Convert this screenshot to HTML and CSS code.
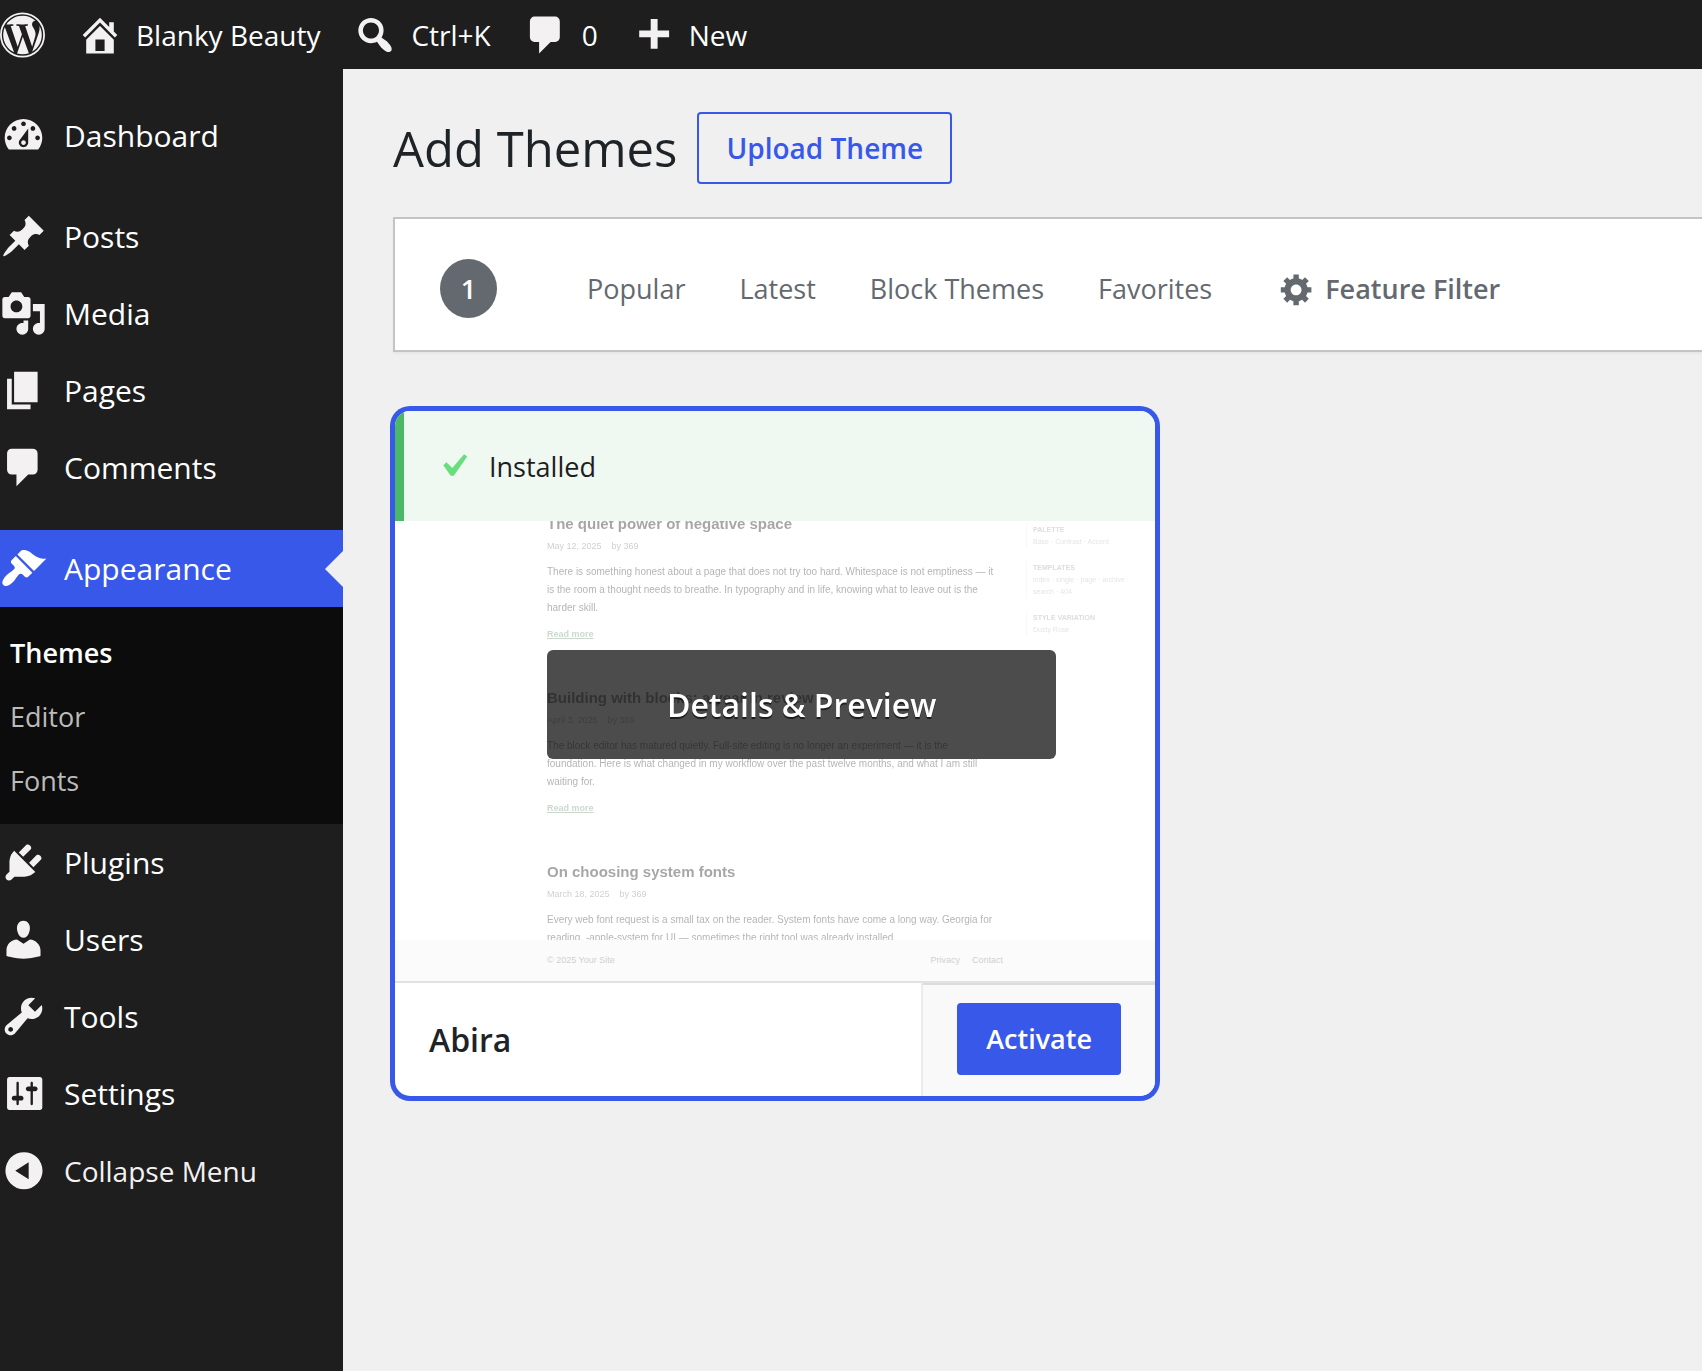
FILE: index.html
```html
<!DOCTYPE html>
<html lang="en">
<head>
  <meta charset="UTF-8" />
  <meta name="viewport" content="width=device-width, initial-scale=1.0"/>
  <title>Add Themes - Blanky Beauty</title>
  <link rel="stylesheet" href="styles.css">
</head>
<body>

  <!-- Admin bar -->
  <header class="admin-bar">
    <a href="#" class="bar-logo" aria-label="About WordPress">
      <svg viewBox="0 0 122.52 122.52"><circle cx="61.26" cy="61.26" r="58.8" fill="none" stroke="currentColor" stroke-width="4.9"/><path d="M8.708 61.26c0 20.802 12.089 38.779 29.619 47.298L13.258 39.872c-2.916 6.536-4.55 13.769-4.55 21.388zM96.74 58.608c0-6.495-2.333-10.993-4.334-14.494-2.664-4.329-5.161-7.995-5.161-12.324 0-4.831 3.664-9.328 8.825-9.328.233 0 .454.029.681.042-9.35-8.566-21.807-13.796-35.489-13.796-18.36 0-34.513 9.42-43.91 23.688 1.233.037 2.395.063 3.382.063 5.497 0 14.006-.667 14.006-.667 2.833-.167 3.167 3.994.337 4.329 0 0-2.847.335-6.015.501L48.2 93.547l11.501-34.493-8.188-22.434c-2.83-.166-5.511-.501-5.511-.501-2.832-.166-2.5-4.496.332-4.329 0 0 8.679.667 13.843.667 5.496 0 14.006-.667 14.006-.667 2.835-.167 3.168 3.994.337 4.329 0 0-2.853.335-6.015.501l18.992 56.494 5.242-17.517c2.272-7.269 4.001-12.49 4.001-16.989zM62.184 65.857l-15.768 45.819c4.708 1.384 9.687 2.141 14.846 2.141 6.12 0 11.989-1.058 17.452-2.979-.141-.225-.269-.464-.374-.724zM107.376 36.046c.226 1.674.354 3.471.354 5.404 0 5.333-.996 11.328-3.996 18.824l-16.053 46.413c15.624-9.111 26.133-26.038 26.133-45.426.001-9.137-2.333-17.729-6.438-25.215z"/></svg>
    </a>
    <a href="#">
      <svg viewBox="0 0 20 20"><path d="M16 8.5l1.53 1.53-1.06 1.06L10 4.6l-6.47 6.49-1.06-1.06L10 2.5l4 4v-2h2v4zm-6-2.46l6 5.99V18H4v-5.97zM12 17v-5H8v5h4z"/></svg>
      <span>Blanky Beauty</span>
    </a>
    <a href="#">
      <svg viewBox="0 0 20 20"><path d="M12.14 4.18c1.87 1.87 2.11 4.75.72 6.89.12.1.22.21.36.31.2.16.47.36.81.59.34.24.56.39.66.47.42.31.73.57.94.78.32.32.6.65.84 1 .25.35.44.69.59 1.04.14.35.21.68.18 1-.02.32-.14.59-.36.81s-.49.34-.81.36c-.31.02-.65-.04-.99-.19-.35-.14-.7-.34-1.04-.59-.35-.24-.68-.52-1-.84-.21-.21-.47-.52-.77-.93-.1-.13-.25-.35-.47-.66-.22-.32-.4-.57-.56-.78-.16-.2-.29-.35-.44-.5-2.07 1.09-4.69.76-6.44-.98-2.14-2.15-2.14-5.64 0-7.78 2.15-2.15 5.63-2.15 7.78 0zm-1.41 6.36c1.36-1.37 1.36-3.58 0-4.95-1.37-1.37-3.59-1.37-4.95 0-1.37 1.37-1.37 3.58 0 4.95 1.36 1.37 3.58 1.37 4.95 0z"/></svg>
      <span>Ctrl+K</span>
    </a>
    <a href="#">
      <svg viewBox="0 0 20 20"><path d="M5 2h9q.82 0 1.41.59T16 4v7q0 .82-.59 1.41T14 13h-2l-5 5v-5H5q-.82 0-1.41-.59T3 11V4q0-.82.59-1.41T5 2z"/></svg>
      <span>0</span>
    </a>
    <a href="#">
      <svg viewBox="0 0 20 20"><path d="M17 8v3h-5v5H9v-5H4V8h5V3h3v5h5z"/></svg>
      <span>New</span>
    </a>
  </header>

  <div class="admin-wrap">
    <!-- Side menu -->
    <nav class="admin-menu" aria-label="Main menu">
      <ul class="menu-list">
        <li><a href="#" class="menu-item">
          <svg viewBox="0 0 20 20"><path d="M3.76 16h12.48c1.1-1.37 1.76-3.11 1.76-5 0-4.42-3.58-8-8-8s-8 3.58-8 8c0 1.89.66 3.63 1.76 5zM10 4c.55 0 1 .45 1 1s-.45 1-1 1-1-.45-1-1 .45-1 1-1zM6 6c.55 0 1 .45 1 1s-.45 1-1 1-1-.45-1-1 .45-1 1-1zm8 0c.55 0 1 .45 1 1s-.45 1-1 1-1-.45-1-1 .45-1 1-1zm-5.37 5.55L12 7v6c0 1.1-.9 2-2 2s-2-.9-2-2c0-.57.24-1.08.63-1.45zM4 10c.55 0 1 .45 1 1s-.45 1-1 1-1-.45-1-1 .45-1 1-1zm12 0c.55 0 1 .45 1 1s-.45 1-1 1-1-.45-1-1 .45-1 1-1zm-5 3c0-.55-.45-1-1-1s-1 .45-1 1 .45 1 1 1 1-.45 1-1z"/></svg>
          Dashboard</a></li>
        <li class="group-start"><a href="#" class="menu-item">
          <svg viewBox="0 0 20 20"><path d="M10.44 3.02l1.82-1.82 6.36 6.35-1.83 1.82c-1.05-.68-2.48-.57-3.41.36l-.75.75c-.92.93-1.04 2.35-.35 3.41l-1.83 1.82-2.41-2.41-2.8 2.79c-.42.42-3.38 2.71-3.8 2.29s1.86-3.39 2.28-3.81l2.79-2.79L4.1 9.36l1.83-1.82c1.05.69 2.48.57 3.4-.36l.75-.75c.93-.92 1.05-2.35.36-3.41z"/></svg>
          Posts</a></li>
        <li><a href="#" class="menu-item">
          <svg viewBox="0 0 20 20"><path d="M13 11V4c0-.55-.45-1-1-1h-1.67L9 1H5L3.67 3H2c-.55 0-1 .45-1 1v7c0 .55.45 1 1 1h10c.55 0 1-.45 1-1zM7 4.5c1.38 0 2.5 1.12 2.5 2.5S8.38 9.5 7 9.5 4.5 8.38 4.5 7 5.62 4.5 7 4.5zM14 6h5v10.5c0 1.38-1.12 2.5-2.5 2.5S14 17.88 14 16.5s1.12-2.5 2.5-2.5c.17 0 .34.02.5.05V9h-3V6zm-4 8.05V13h2v3.5c0 1.38-1.12 2.5-2.5 2.5S7 17.88 7 16.5 8.12 14 9.5 14c.17 0 .34.02.5.05z"/></svg>
          Media</a></li>
        <li><a href="#" class="menu-item">
          <svg viewBox="0 0 20 20"><path d="M6 15V2h10v13H6zm-1 1h8v2H3V5h2v11z"/></svg>
          Pages</a></li>
        <li><a href="#" class="menu-item">
          <svg viewBox="0 0 20 20"><path d="M5 2h9q.82 0 1.41.59T16 4v7q0 .82-.59 1.41T14 13h-2l-5 5v-5H5q-.82 0-1.41-.59T3 11V4q0-.82.59-1.41T5 2z"/></svg>
          Comments</a></li>
        <li class="group-start">
          <a href="#" class="menu-item current">
            <svg viewBox="0 0 20 20"><path d="M14.48 11.06L7.41 3.99l1.5-1.5c.5-.56 2.3-.47 3.51.32 1.21.8 1.43 1.28 2.91 2.1 1.18.64 2.45 1.26 4.45.85zm-.71.71L6.7 4.7 4.93 6.47c-.39.39-.39 1.02 0 1.41l1.06 1.06c.39.39.39 1.03 0 1.42-.6.6-1.43 1.11-2.21 1.69-.35.26-.7.53-1.01.84C1.43 14.23.4 16.08 1.4 17.07c.99 1 2.84-.03 4.18-1.36.31-.31.58-.66.85-1.02.57-.78 1.08-1.61 1.69-2.21.39-.39 1.02-.39 1.41 0l1.06 1.06c.39.39 1.02.39 1.41 0z"/></svg>
            Appearance</a>
          <ul class="submenu">
            <li><a href="#" class="current">Themes</a></li>
            <li><a href="#">Editor</a></li>
            <li><a href="#">Fonts</a></li>
          </ul>
        </li>
        <li><a href="#" class="menu-item">
          <svg viewBox="0 0 20 20"><path d="M13.11 4.36L9.87 7.6 8 5.73l3.24-3.24c.35-.34 1.05-.2 1.56.32.52.51.66 1.21.31 1.55zm-8 1.77l.91-1.12 9.01 9.01-1.19.84c-.71.71-2.63 1.16-3.82 1.16H6.14L4.9 17.26c-.59.59-1.54.59-2.12 0-.59-.58-.59-1.53 0-2.12l1.24-1.24v-3.88c0-1.13.4-3.19 1.09-3.89zm7.26 3.97l3.24-3.24c.34-.35 1.04-.21 1.55.31.52.51.66 1.21.31 1.55l-3.24 3.25z"/></svg>
          Plugins</a></li>
        <li><a href="#" class="menu-item">
          <svg viewBox="0 0 20 20"><path d="M10 9.25c-2.27 0-2.73-3.44-2.73-3.44C7 4.02 7.82 2 9.97 2c2.16 0 2.98 2.02 2.71 3.81 0 0-.41 3.44-2.68 3.44zm0 2.57L12.72 10c2.39 0 4.52 2.33 4.52 4.53v2.49s-3.65 1.13-7.24 1.13c-3.65 0-7.24-1.13-7.24-1.13v-2.49c0-2.25 1.94-4.48 4.47-4.48z"/></svg>
          Users</a></li>
        <li><a href="#" class="menu-item">
          <svg viewBox="0 0 20 20"><path d="M16.68 9.77c-1.34 1.34-3.3 1.67-4.95.99l-5.41 6.52c-.99.99-2.59.99-3.58 0s-.99-2.59 0-3.57l6.52-5.42c-.68-1.65-.35-3.61.99-4.95 1.28-1.28 3.12-1.62 4.72-1.06l-2.89 2.89 2.82 2.82 2.86-2.87c.53 1.58.18 3.39-1.08 4.65zM3.81 16.21c.4.39 1.04.39 1.43 0 .4-.4.4-1.04 0-1.43-.39-.4-1.03-.4-1.43 0-.39.39-.39 1.03 0 1.43z"/></svg>
          Tools</a></li>
        <li><a href="#" class="menu-item">
          <svg viewBox="0 0 20 20"><path d="M18 16V4c0-.55-.45-1-1-1H4c-.55 0-1 .45-1 1v12c0 .55.45 1 1 1h13c.55 0 1-.45 1-1zM8 11h1c.55 0 1 .45 1 1s-.45 1-1 1H8v1.5c0 .28-.22.5-.5.5s-.5-.22-.5-.5V13H6c-.55 0-1-.45-1-1s.45-1 1-1h1V5.5c0-.28.22-.5.5-.5s.5.22.5.5V11zm5-2h-1c-.55 0-1-.45-1-1s.45-1 1-1h1V5.5c0-.28.22-.5.5-.5s.5.22.5.5V7h1c.55 0 1 .45 1 1s-.45 1-1 1h-1v5.5c0 .28-.22.5-.5.5s-.5-.22-.5-.5V9z"/></svg>
          Settings</a></li>
        <li><button type="button" class="menu-item collapse">
          <svg viewBox="0 0 20 20"><path fill-rule="evenodd" d="M10.2 2.2a7.9 7.9 0 1 0 0 15.8 7.9 7.9 0 0 0 0-15.8zM12.200 6.500v7.200L6.500 10.100z"/></svg>
          Collapse Menu</button></li>
      </ul>
    </nav>

    <main class="content">
      <div class="page-head">
        <h1>Add Themes</h1>
        <button type="button" class="btn btn-outline">Upload Theme</button>
      </div>

      <!-- Filter bar -->
      <div class="filter-bar">
        <span class="count">1</span>
        <nav class="filter-links" aria-label="Theme filters">
          <a href="#">Popular</a>
          <a href="#">Latest</a>
          <a href="#">Block Themes</a>
          <a href="#">Favorites</a>
        </nav>
        <button type="button" class="feature-filter">
          <svg viewBox="0 0 20 20"><path d="M18 12h-2.18c-.17.7-.44 1.35-.81 1.93l1.54 1.54-2.1 2.1-1.54-1.54c-.58.36-1.23.63-1.91.79V19H8v-2.18c-.68-.16-1.33-.43-1.91-.79l-1.54 1.54-2.12-2.12 1.54-1.54c-.36-.58-.63-1.23-.79-1.91H1V9.03h2.17c.16-.7.44-1.35.8-1.94L2.43 5.55l2.1-2.1 1.54 1.54c.58-.37 1.24-.64 1.93-.81V2h3v2.18c.68.16 1.33.43 1.91.79l1.54-1.54 2.12 2.12-1.54 1.54c.36.59.64 1.24.8 1.94H18V12zm-8.5 1.5c1.66 0 3-1.34 3-3s-1.34-3-3-3-3 1.34-3 3 1.34 3 3 3z"/></svg>
          Feature Filter
        </button>
      </div>

      <!-- Theme card -->
      <article class="theme-card">
        <div class="notice">
          <svg viewBox="0 0 20 20"><path d="M14.83 4.89l1.34.94-5.81 8.38H9.02L5.78 9.67l1.34-1.25 2.57 2.4z"/></svg>
          Installed
        </div>
        <div class="screenshot">
          <div class="preview">
            <div class="preview-body">
              <div class="posts">
                <section class="post">
                  <h3>The quiet power of negative space</h3>
                  <p class="meta"><span>May 12, 2025</span><span>by 369</span></p>
                  <p>There is something honest about a page that does not try too hard. Whitespace is not emptiness — it<br>is the room a thought needs to breathe. In typography and in life, knowing what to leave out is the<br>harder skill.</p>
                  <a href="#">Read more</a>
                </section>
                <section class="post">
                  <h3>Building with blocks: a year in review</h3>
                  <p class="meta"><span>April 3, 2025</span><span>by 369</span></p>
                  <p>The block editor has matured quietly. Full-site editing is no longer an experiment — it is the<br>foundation. Here is what changed in my workflow over the past twelve months, and what I am still<br>waiting for.</p>
                  <a href="#">Read more</a>
                </section>
                <section class="post">
                  <h3>On choosing system fonts</h3>
                  <p class="meta"><span>March 18, 2025</span><span>by 369</span></p>
                  <p>Every web font request is a small tax on the reader. System fonts have come a long way. Georgia for<br>reading, -apple-system for UI — sometimes the right tool was already installed.</p>
                </section>
              </div>
              <aside class="widgets">
                <section>
                  <h4>PALETTE</h4>
                  <p>Base · Contrast · Accent</p>
                </section>
                <section>
                  <h4>TEMPLATES</h4>
                  <p>index · single · page · archive ·<br>search · 404</p>
                </section>
                <section>
                  <h4>STYLE VARIATION</h4>
                  <p>Dusty Rose</p>
                </section>
              </aside>
            </div>
            <div class="preview-footer">
              <span>© 2025 Your Site</span>
              <span class="legal"><span>Privacy</span><span>Contact</span></span>
            </div>
          </div>
          <button type="button" class="more-details">Details &amp; Preview</button>
        </div>
        <footer class="theme-bar">
          <h2>Abira</h2>
          <div class="theme-actions">
            <button type="button" class="btn btn-primary">Activate</button>
          </div>
        </footer>
      </article>
    </main>
  </div>

</body>
</html>
```

FILE: styles.css
```css
/* --- Base --- */
* {
  box-sizing: border-box;
}

body {
  margin: 0;
  min-height: 100vh;
  display: flex;
  flex-direction: column;
  overflow-x: hidden;
  background-color: #f0f0f0;
  color: #1d2327;
  font-family: "Segoe UI", "Open Sans", "Noto Sans", sans-serif;
  font-size: 27px;
}

a {
  color: inherit;
  text-decoration: none;
}

ul {
  list-style: none;
  margin: 0;
  padding: 0;
}

h1, h2, h3, h4, p {
  margin: 0;
}

button {
  font: inherit;
  color: inherit;
  border: none;
  background: none;
  cursor: pointer;
}

svg {
  fill: currentColor;
  flex-shrink: 0;
}

/* --- Admin bar --- */
.admin-bar {
  display: flex;
  align-items: center;
  gap: 32px;
  height: 69px;
  background-color: #1e1e1e;
  color: #f3f1f1;
  font-size: 28px;
}

.admin-bar a {
  display: flex;
  align-items: center;
  gap: 13px;
  white-space: nowrap;
}

.admin-bar svg {
  width: 46px;
  height: 46px;
}

.admin-bar .bar-logo svg {
  width: 45px;
}

.admin-bar span {
  color: #fff;
}

/* --- Side menu --- */
.admin-wrap {
  display: flex;
  flex: 1;
}

.admin-menu {
  width: 343px;
  flex-shrink: 0;
  padding-top: 28px;
  background-color: #1e1e1e;
  color: #fff;
}

.menu-item {
  position: relative;
  display: flex;
  align-items: center;
  gap: 17px;
  width: 100%;
  height: 77px;
  padding: 0;
  font-size: 30px;
}

.menu-item svg {
  width: 47px;
  height: 47px;
  color: #f3f1f1;
}

.menu-item.current {
  background-color: #3858e9;
}

.menu-item.current svg {
  color: #fff;
}

.menu-item.current::after {
  content: "";
  position: absolute;
  right: 0;
  top: 50%;
  margin-top: -18px;
  border: 18px solid transparent;
  border-left: none;
  border-right-color: #f0f0f0;
}

.menu-item.collapse {
  font-size: 28px;
  color: #f3f1f1;
}

.group-start {
  margin-top: 24px;
}

.submenu {
  padding: 14px 0 11px;
  background-color: #0c0c0c;
}

.submenu a {
  display: block;
  padding-left: 10px;
  line-height: 64px;
  color: #bbb;
}

.submenu a.current {
  color: #fff;
  font-weight: 600;
}

/* --- Content --- */
.content {
  flex: 1;
  min-width: 0;
  padding: 43px 0 60px 50px;
}

.page-head {
  display: flex;
  align-items: center;
  gap: 20px;
  margin-bottom: 33px;
}

.page-head h1 {
  font-size: 49px;
  font-weight: 400;
  line-height: 64px;
}

.btn {
  height: 72px;
  padding: 0 27px;
  border: 2px solid #3858e9;
  border-radius: 4px;
  font-weight: 600;
  white-space: nowrap;
}

.btn-outline {
  font-size: 28px;
  color: #3858e9;
}

.btn-primary {
  background-color: #3858e9;
  color: #fff;
}

/* --- Filter bar --- */
.filter-bar {
  display: flex;
  align-items: center;
  height: 135px;
  padding: 8px 0 0 45px;
  margin-bottom: 57px;
  border: 2px solid #c3c4c7;
  border-right: none;
  background-color: #fff;
  box-shadow: 0 2px 2px rgba(0, 0, 0, 0.04);
  color: #646970;
  white-space: nowrap;
}

.count {
  width: 57px;
  height: 59px;
  margin-right: 90px;
  border-radius: 50%;
  background-color: #646970;
  color: #fff;
  font-weight: 600;
  line-height: 59px;
  text-align: center;
}

.filter-links {
  display: flex;
  gap: 54px;
}

.feature-filter {
  display: flex;
  align-items: center;
  gap: 10px;
  margin-left: 67px;
  padding: 0;
  font-weight: 600;
}

.feature-filter svg {
  width: 36px;
  height: 36px;
}

/* --- Theme card --- */
.theme-card {
  position: relative;
  width: 100%;
  max-width: 764px;
  border: 2px solid #3858e9;
  border-radius: 17px;
  overflow: hidden;
  background-color: #fff;
  box-shadow: 0 0 0 3px #3858e9;
}

/* lies over the top of the screenshot */
.notice {
  position: absolute;
  top: 0;
  left: 0;
  right: 0;
  z-index: 1;
  display: flex;
  align-items: center;
  gap: 13px;
  height: 110px;
  padding-left: 26px;
  border-left: 9px solid #4ab866;
  background-color: #eff8f1;
  color: #1e1e1e;
}

.notice svg {
  width: 46px;
  height: 46px;
  color: #68de7c;
}

.screenshot {
  position: relative;
  height: 572px;
  overflow: hidden;
  border-bottom: 2px solid #e2e2e2;
}

.more-details {
  position: absolute;
  top: 239px;
  left: 20%;
  right: 13%;
  height: 109px;
  border-radius: 6px;
  background-color: rgba(0, 0, 0, 0.7);
  color: #fff;
  font-size: 32px;
  font-weight: 600;
  text-shadow: 0 2px 0 rgba(0, 0, 0, 0.6);
}

/* --- Site preview inside the screenshot --- */
.preview {
  display: flex;
  flex-direction: column;
  height: 100%;
  font-family: "Liberation Sans", Arial, sans-serif;
  font-size: 10px;
  opacity: 0.4;
}

.preview-body {
  display: flex;
  flex: 1;
  min-height: 0;
  gap: 22px;
  padding: 102px 20px 0 20%;
  overflow: hidden;
  white-space: nowrap;
}

.posts {
  width: 457px;
  flex-shrink: 0;
}

.post {
  margin-bottom: 46px;
  line-height: 18px;
  color: #444;
}

.post h3 {
  font-size: 15px;
  line-height: 22px;
  color: #222;
}

.post .meta {
  display: flex;
  gap: 10px;
  margin: 4px 0 10px;
  font-size: 9px;
  line-height: 14px;
  color: #888;
}

.post a {
  display: block;
  margin-top: 10px;
  font-size: 9px;
  font-weight: 700;
  line-height: 14px;
  text-decoration: underline;
  color: #7f9f85;
}

.widgets {
  padding-top: 10px;
  font-size: 7px;
  line-height: 12px;
  color: #bbb;
}

.widgets section {
  margin-bottom: 13px;
  padding-left: 6px;
  border-left: 1px solid #eee;
}

.widgets h4 {
  font-size: 7px;
  line-height: 13px;
  color: #aaa;
}

.preview-footer {
  display: flex;
  justify-content: space-between;
  height: 41px;
  padding: 0 20% 0 20%;
  background-color: #f4f4f4;
  font-size: 9px;
  line-height: 40px;
  color: #888;
}

.legal {
  display: flex;
  gap: 12px;
}

/* --- Theme name and actions --- */
.theme-bar {
  display: flex;
  height: 113px;
}

.theme-bar h2 {
  flex: 1;
  padding-left: 34px;
  font-size: 32px;
  font-weight: 600;
  line-height: 114px;
}

.theme-actions {
  display: flex;
  align-items: center;
  padding: 0 34px 2px;
  border-left: 2px solid #ebebeb;
  background-color: #f9f9f9;
  box-shadow: inset 0 2px 0 #dcdcdc;
}
```
